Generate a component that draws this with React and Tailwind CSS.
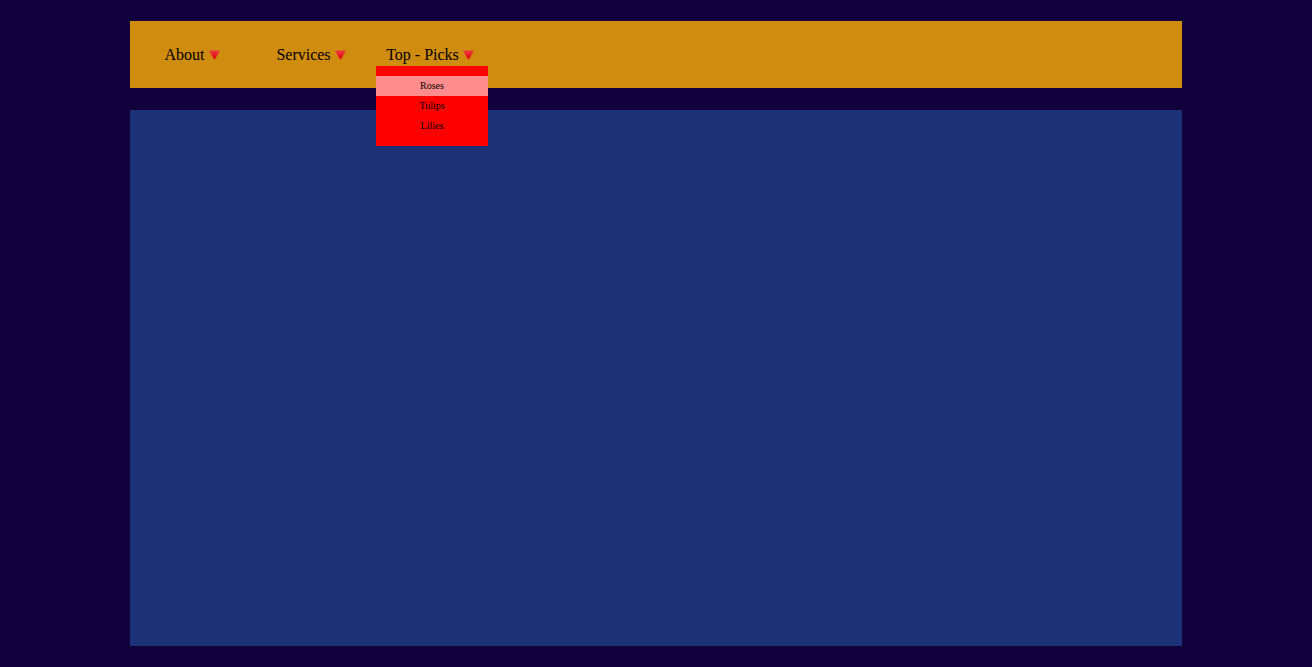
const sections = [
  { label: 'About' },
  { label: 'Services' },
  { label: 'Top - Picks', items: ['Roses', 'Tulips', 'Lilies'] },
];

function Triangle() {
  return (
    <svg viewBox="0 0 11 10" className="mx-1 h-[10px] w-[11px] shrink-0" aria-hidden="true">
      <defs>
        <linearGradient id="tri" x1="0" y1="0" x2="0" y2="1">
          <stop offset="0" stopColor="#ee4040" />
          <stop offset="0.5" stopColor="#e81c28" />
          <stop offset="1" stopColor="#dc0014" />
        </linearGradient>
      </defs>
      <path d="M0.8 0.4H10.2Q11 0.4 10.6 1.2L6.2 8.9Q5.5 9.8 4.8 8.9L0.4 1.2Q0 0.4 0.8 0.4Z" fill="url(#tri)" />
    </svg>
  );
}

export default function App() {
  return (
    <div className="grid min-h-screen grid-rows-[1fr_8fr] gap-[22px] bg-[#11003b] px-[130px] py-[21px] font-['Liberation_Serif',serif] text-black">
      <nav className="flex items-center bg-[#cf8c0e] pl-2">
        <ul className="flex gap-[7px]">
          {sections.map(({ label, items }) => (
            <li key={label} className="relative w-28">
              <button type="button" className="flex h-[22px] w-full items-center justify-center whitespace-nowrap text-base">
                {label}
                <Triangle />
              </button>
              {items && (
                <ul className="absolute left-0 top-full w-full bg-[#ff0000] py-[10px] text-center text-[10px] leading-5">
                  {items.map((item, i) => (
                    <li key={item} className={i === 0 ? 'bg-[#ff8d8d]' : 'hover:bg-[#ff8d8d]'}>
                      <a href="#" className="block">{item}</a>
                    </li>
                  ))}
                </ul>
              )}
            </li>
          ))}
        </ul>
      </nav>
      <main className="bg-[#1d3176]" />
    </div>
  );
}
